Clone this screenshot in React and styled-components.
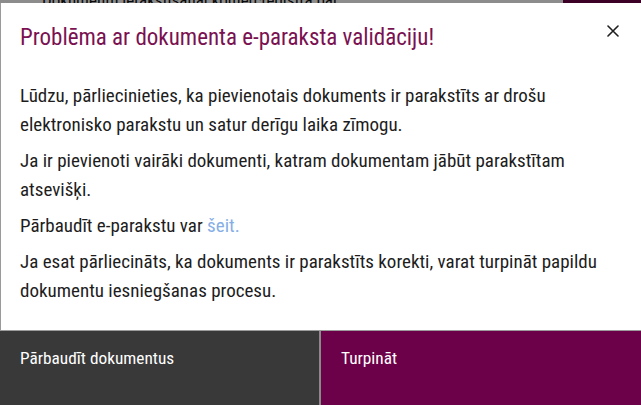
import styled, { createGlobalStyle } from "styled-components";

const GlobalStyle = createGlobalStyle`
  html, body {
    margin: 0;
    padding: 0;
    width: 641px;
    height: 405px;
    overflow: hidden;
  }
  body {
    font-family: "Roboto Condensed", "Roboto", "Liberation Sans", sans-serif;
    font-stretch: condensed;
    background: #ffffff;
  }
`;

export default function App() {
  return (
    <>
      <GlobalStyle />
      <Page>
        <PageLine>
          <PageText>Dokumentu ierakstīšanai komercreģistrā par</PageText>
          <PageButton />
        </PageLine>
      </Page>
      <Overlay />
      <Modal role="dialog" aria-modal="true">
        <Header>
          <Title>Problēma ar dokumenta e-paraksta validāciju!</Title>
          <CloseButton aria-label="Aizvērt">
            <svg width="12" height="12" viewBox="0 0 12 12">
              <path d="M1 1L11 11M11 1L1 11" stroke="#1f1f1f" strokeWidth="1.6" strokeLinecap="round" />
            </svg>
          </CloseButton>
        </Header>
        <Body>
          <Paragraph>
            Lūdzu, pārliecinieties, ka pievienotais dokuments ir parakstīts ar drošu elektronisko parakstu un satur
            derīgu laika zīmogu.
          </Paragraph>
          <Paragraph>Ja ir pievienoti vairāki dokumenti, katram dokumentam jābūt parakstītam atsevišķi.</Paragraph>
          <Paragraph>
            Pārbaudīt e-parakstu var <Link href="#">šeit.</Link>
          </Paragraph>
          <Paragraph>
            Ja esat pārliecināts, ka dokuments ir parakstīts korekti, varat turpināt papildu dokumentu iesniegšanas
            procesu.
          </Paragraph>
        </Body>
        <Footer>
          <FooterButton $variant="secondary">Pārbaudīt dokumentus</FooterButton>
          <FooterButton $variant="primary">Turpināt</FooterButton>
        </Footer>
      </Modal>
    </>
  );
}

const Page = styled.div`
  width: 641px;
  height: 405px;
  background: #ffffff;
`;

const PageLine = styled.div`
  display: flex;
  justify-content: space-between;
  align-items: flex-start;
  padding-left: 42px;
  height: 20px;
  margin-top: -10px;
`;

const PageText = styled.span`
  font-size: 17px;
  line-height: 20px;
  color: #111;
`;

const PageButton = styled.div`
  width: 78px;
  height: 20px;
  background: #6d0048;
`;

const Overlay = styled.div`
  position: fixed;
  inset: 0;
  background: rgba(0, 0, 0, 0.45);
`;

const Modal = styled.div`
  position: absolute;
  top: 3px;
  left: 0;
  width: 641px;
  height: 402px;
  display: flex;
  flex-direction: column;
  background: #ffffff;
  border-left: 1px solid #9a9a9a;
  box-sizing: border-box;
`;

const Header = styled.div`
  display: flex;
  justify-content: space-between;
  align-items: flex-start;
  padding: 20px 22px 0 19px;
`;

const Title = styled.h2`
  margin: 0;
  font-size: 23px;
  line-height: 30px;
  font-weight: 400;
  color: #7a1151;
`;

const CloseButton = styled.button`
  border: 0;
  background: transparent;
  padding: 0;
  margin-top: 2px;
  width: 12px;
  height: 12px;
  display: flex;
  cursor: pointer;
`;

const Body = styled.div`
  flex: 1;
  padding: 28px 20px 0 19px;
`;

const Paragraph = styled.p`
  margin: 0 0 7px;
  font-size: 19px;
  line-height: 29px;
  color: #1d1d1d;
`;

const Link = styled.a`
  color: #86aee6;
  text-decoration: none;
`;

const Footer = styled.div`
  display: grid;
  grid-template-columns: 319px 1fr;
  height: 74px;
  border-top: 1px solid #9c9c9c;
  margin-left: -1px;
`;

const FooterButton = styled.button`
  border: 0;
  margin: 0;
  text-align: left;
  padding: 16px 20px 0;
  display: flex;
  align-items: flex-start;
  font-family: inherit;
  font-stretch: condensed;
  font-size: 17.3px;
  line-height: 22px;
  font-weight: 400;
  color: #ffffff;
  cursor: pointer;
  background: ${(p) => (p.$variant === "primary" ? "#6c0049" : "#393939")};
  border-left: ${(p) => (p.$variant === "primary" ? "2px solid #8a8a8a" : "0")};
`;
